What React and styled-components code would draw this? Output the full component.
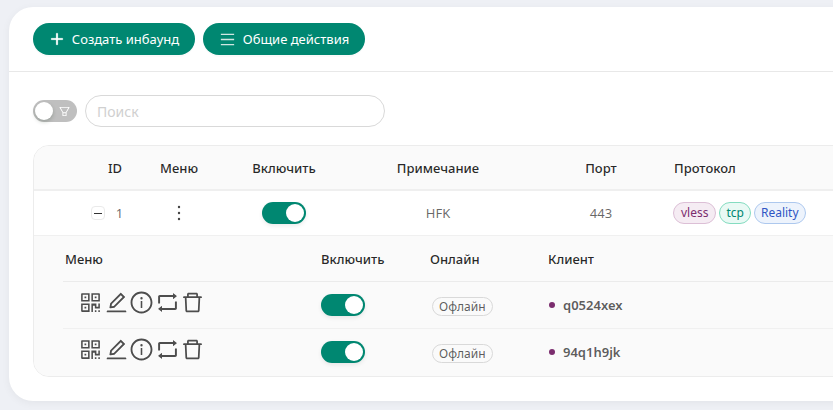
import React from "react";
import styled, { createGlobalStyle } from "styled-components";
import {
  AiOutlinePlus,
  AiOutlineMenu,
  AiOutlineFilter,
  AiOutlineQrcode,
  AiOutlineEdit,
  AiOutlineInfoCircle,
  AiOutlineRetweet,
  AiOutlineDelete,
} from "react-icons/ai";

const clients = ["q0524xex", "94q1h9jk"];

const GlobalStyle = createGlobalStyle`
  html, body {
    margin: 0;
    height: 100%;
    overflow: hidden;
    background: #eef0f5;
    font-family: "Noto Sans", "Open Sans", sans-serif;
  }
`;

const Page = styled.div`
  width: 833px;
  height: 410px;
  padding: 7px 0 0 9px;
  box-sizing: border-box;
  overflow: hidden;
`;

const Card = styled.div`
  width: 900px;
  height: 394px;
  background: #fff;
  border-radius: 24px;
  box-shadow: 0 2px 8px rgba(0, 0, 0, 0.05);
`;

const Toolbar = styled.div`
  height: 65px;
  padding: 16px 24px 0;
  box-sizing: border-box;
  display: flex;
  gap: 8px;
  border-bottom: 1px solid #e8e8e8;
`;

const ActionButton = styled.button`
  height: 32px;
  width: 162px;
  border: none;
  border-radius: 16px;
  background: #008771;
  color: #fff;
  font: 13px "Noto Sans", sans-serif;
  display: flex;
  align-items: center;
  justify-content: center;
  gap: 7px;
  padding: 0;
  box-shadow: 0 2px 0 rgba(0, 0, 0, 0.02);
`;

const Filters = styled.div`
  display: flex;
  align-items: center;
  gap: 8px;
  padding: 23px 24px 18px;
`;

const FilterToggle = styled.div`
  position: relative;
  width: 44px;
  height: 22px;
  border-radius: 11px;
  background: #bfbfbf;
  display: flex;
  align-items: center;
  justify-content: flex-end;
  padding-right: 6px;
  box-sizing: border-box;
  color: #fff;
`;

const FilterKnob = styled.span`
  position: absolute;
  left: 2px;
  top: 2px;
  width: 18px;
  height: 18px;
  border-radius: 50%;
  background: #fff;
  box-shadow: 0 2px 4px rgba(0, 35, 11, 0.2);
`;

const SearchInput = styled.input`
  width: 300px;
  height: 32px;
  box-sizing: border-box;
  border: 1px solid #d9d9d9;
  border-radius: 16px;
  padding: 0 11px;
  font: 14px "Noto Sans", sans-serif;
  outline: none;
  &::placeholder {
    color: #d0d0d0;
  }
`;

const TableBox = styled.div`
  margin-left: 24px;
  border: 1px solid #ececec;
  border-radius: 16px;
  overflow: hidden;
`;

const MainRow = styled.div`
  display: grid;
  grid-template-columns: 49px 64px 64px 146px 162px 142px 1fr;
  height: ${(p) => p.$height}px;
  align-items: center;
  background: ${(p) => (p.$head ? "#fafafa" : "#fff")};
  border-bottom: ${(p) => (p.$head ? "2px solid #efefef" : "1px solid #f0f0f0")};
  box-sizing: border-box;
`;

const HeadCell = styled.div`
  font-size: 13px;
  font-weight: 500;
  color: rgba(0, 0, 0, 0.85);
  text-align: ${(p) => p.$align || "center"};
  padding-left: ${(p) => p.$pad || 0}px;
`;

const BodyCell = styled.div`
  font-size: 13px;
  color: rgba(0, 0, 0, 0.6);
  display: flex;
  align-items: center;
  justify-content: ${(p) => p.$justify || "center"};
  gap: ${(p) => p.$gap || 0}px;
  padding-left: ${(p) => p.$pad || 0}px;
`;

const ExpandButton = styled.span`
  width: 14px;
  height: 14px;
  box-sizing: border-box;
  border: 1px solid #eaeaea;
  border-radius: 4px;
  display: flex;
  align-items: center;
  justify-content: center;
  &::before {
    content: "";
    width: 8px;
    height: 1px;
    background: #333;
  }
`;

const ExpandCell = styled.div`
  display: flex;
  justify-content: flex-end;
  margin-right: -22px;
`;

const RowId = styled.span`
  margin-left: 9px;
`;

const MoreDots = styled.svg`
  width: 4px;
  height: 16px;
  color: #444;
`;

const Switch = styled.span`
  position: relative;
  display: inline-block;
  width: 44px;
  height: 22px;
  border-radius: 11px;
  background: #008771;
  box-shadow: 0 2px 4px rgba(0, 0, 0, 0.08);
  &::after {
    content: "";
    position: absolute;
    right: 2px;
    top: 2px;
    width: 18px;
    height: 18px;
    border-radius: 50%;
    background: #fff;
  }
`;

const Tag = styled.span`
  height: 22px;
  box-sizing: border-box;
  padding: 0 ${(p) => p.$pad || 8}px;
  border: 1px solid ${(p) => p.$border};
  border-radius: 11px;
  background: ${(p) => p.$bg};
  color: ${(p) => p.$color};
  font-size: 12px;
  line-height: 20px;
  white-space: nowrap;
`;

const Expanded = styled.div`
  background: #fafafa;
  padding: 0 0 0 29px;
  height: 140px;
`;

const SubRow = styled.div`
  display: grid;
  grid-template-columns: 258px 109px 118px 1fr;
  height: ${(p) => p.$height}px;
  align-items: center;
  border-bottom: 1px solid ${(p) => (p.$last ? "transparent" : p.$head ? "#ebebeb" : "#f0f0f0")};
  box-sizing: border-box;
`;

const SubHead = styled.div`
  font-size: 13px;
  font-weight: 500;
  color: rgba(0, 0, 0, 0.85);
  padding-left: ${(p) => p.$pad || 0}px;
`;

const IconGroup = styled.div`
  display: flex;
  align-items: center;
  gap: 0.5px;
  padding-left: 15px;
  margin-top: -5px;
  color: #4d4d4d;
  font-size: 25px;
`;

const SwitchCell = styled.div`
  display: flex;
`;

const OnlineCell = styled.div`
  padding-left: 2px;
`;

const ClientCell = styled.div`
  display: flex;
  align-items: center;
  gap: 8px;
  padding-left: 0;
  font-size: 13px;
  font-weight: 600;
  color: rgba(0, 0, 0, 0.65);
`;

const Dot = styled.span`
  width: 6px;
  height: 6px;
  margin-left: 1px;
  border-radius: 50%;
  background: #7b2d6e;
`;

export default function App() {
  return (
    <Page>
      <GlobalStyle />
      <Card>
        <Toolbar>
          <ActionButton>
            <AiOutlinePlus size={16} stroke="currentColor" strokeWidth={50} />
            Создать инбаунд
          </ActionButton>
          <ActionButton>
            <AiOutlineMenu size={17} color="#cfe7e2" />
            Общие действия
          </ActionButton>
        </Toolbar>
        <Filters>
          <FilterToggle>
            <FilterKnob />
            <AiOutlineFilter size={13} />
          </FilterToggle>
          <SearchInput placeholder="Поиск" />
        </Filters>
        <TableBox>
          <MainRow $head $height={45}>
            <span />
            <HeadCell>ID</HeadCell>
            <HeadCell>Меню</HeadCell>
            <HeadCell>Включить</HeadCell>
            <HeadCell>Примечание</HeadCell>
            <HeadCell $pad={22}>Порт</HeadCell>
            <HeadCell $align="left" $pad={13}>Протокол</HeadCell>
          </MainRow>
          <MainRow $height={45}>
            <ExpandCell>
              <ExpandButton />
            </ExpandCell>
            <BodyCell>
              <RowId>1</RowId>
            </BodyCell>
            <BodyCell>
              <MoreDots viewBox="0 0 4 16">
                <circle cx="2" cy="2" r="1.2" fill="currentColor" />
                <circle cx="2" cy="8" r="1.2" fill="currentColor" />
                <circle cx="2" cy="14" r="1.2" fill="currentColor" />
              </MoreDots>
            </BodyCell>
            <BodyCell>
              <Switch />
            </BodyCell>
            <BodyCell>HFK</BodyCell>
            <BodyCell $pad={22}>443</BodyCell>
            <BodyCell $justify="flex-start" $pad={12} $gap={3}>
              <Tag $bg="#f5ecf3" $border="#dcbfd6" $color="#7b2d6e" $pad={7}>vless</Tag>
              <Tag $bg="#e9f9f4" $border="#84dcc0" $color="#008771" $pad={6}>tcp</Tag>
              <Tag $bg="#edf3fc" $border="#adc8ee" $color="#2f55c4" $pad={6}>Reality</Tag>
            </BodyCell>
          </MainRow>
          <Expanded>
            <SubRow $head $height={46}>
              <SubHead $pad={2}>Меню</SubHead>
              <SubHead>Включить</SubHead>
              <SubHead>Онлайн</SubHead>
              <SubHead>Клиент</SubHead>
            </SubRow>
            {clients.map((name, i) => (
              <SubRow key={name} $height={47} $last={i === clients.length - 1}>
                <IconGroup>
                  <AiOutlineQrcode />
                  <AiOutlineEdit />
                  <AiOutlineInfoCircle />
                  <AiOutlineRetweet />
                  <AiOutlineDelete />
                </IconGroup>
                <SwitchCell>
                  <Switch />
                </SwitchCell>
                <OnlineCell>
                  <Tag $bg="#fafafa" $border="#d9d9d9" $color="rgba(0,0,0,.65)" $pad={6}>Офлайн</Tag>
                </OnlineCell>
                <ClientCell>
                  <Dot />
                  {name}
                </ClientCell>
              </SubRow>
            ))}
          </Expanded>
        </TableBox>
      </Card>
    </Page>
  );
}
